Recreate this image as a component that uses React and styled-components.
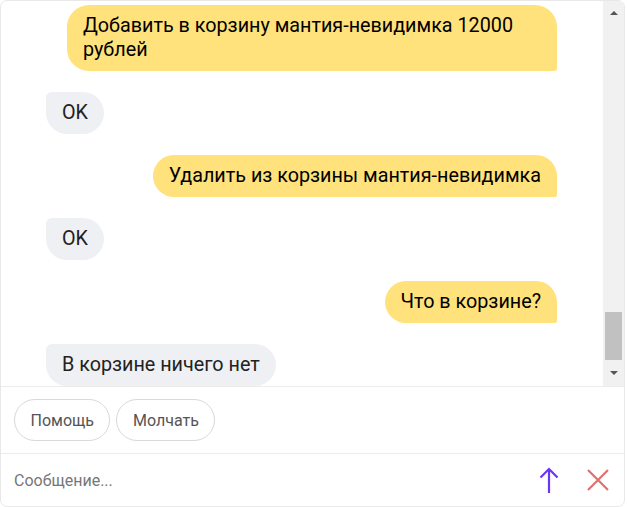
import React from "react";
import styled, { createGlobalStyle } from "styled-components";

const Global = createGlobalStyle`
  html, body { margin: 0; padding: 0; background: #fff; }
  body { font-family: Roboto, "Noto Sans", Arial, sans-serif; }
  * { box-sizing: border-box; }
`;

const Frame = styled.div`
  width: 625px;
  height: 507px;
  border: 1px solid #e8e8e8;
  border-radius: 7px;
  display: flex;
  flex-direction: column;
  overflow: hidden;
  background: #fff;
`;

const ChatArea = styled.div`
  height: 385px;
  flex: none;
  display: flex;
`;

const MessageList = styled.div`
  flex: 1;
  min-width: 0;
  overflow: hidden;
  padding: 0 46px 0 45px;
  display: flex;
  flex-direction: column;
  justify-content: flex-end;
  gap: 21px;
`;

const Scrollbar = styled.div`
  width: 21px;
  flex: none;
  background: #f1f1f1;
  display: flex;
  flex-direction: column;
`;

const ScrollButton = styled.div`
  height: ${(p) => p.$h}px;
  flex: none;
  display: flex;
  justify-content: center;
  align-items: ${(p) => (p.$down ? "flex-start" : "center")};
  padding-top: ${(p) => (p.$down ? 3 : 0)}px;
`;

const Track = styled.div`
  flex: 1;
  display: flex;
  flex-direction: column;
  justify-content: flex-end;
  padding: 0 2px 8px 2px;
`;

const Thumb = styled.div`
  height: 48px;
  background: #c1c1c1;
`;

const Bubble = styled.div`
  flex: none;
  max-width: 490px;
  padding: 9px 16px;
  font-size: 19.75px;
  line-height: 24px;
  color: ${(p) => (p.$user ? "#000" : "#222")};
  background: ${(p) => (p.$user ? "#ffe27b" : "#eff0f4")};
  align-self: ${(p) => (p.$user ? "flex-end" : "flex-start")};
  border-radius: ${(p) => (p.$user ? "22px 22px 3px 22px" : "6px 22px 22px 22px")};
`;

const Suggests = styled.div`
  flex: none;
  border-top: 1px solid #ececec;
  padding: 12px 13px;
  display: flex;
  gap: 6px;
`;

const Chip = styled.button`
  height: 42px;
  padding: 0 15.5px;
  border: 1px solid #d9d9d9;
  border-radius: 21px;
  background: #fff;
  font-family: Roboto, "Noto Sans", Arial, sans-serif;
  font-size: 16px;
  color: #555;
  cursor: pointer;
`;

const InputRow = styled.div`
  flex: 1;
  border-top: 1px solid #ececec;
  display: flex;
  align-items: center;
  padding: 0 10px 0 13px;
  gap: 17px;
`;

const Input = styled.input`
  flex: 1;
  border: none;
  outline: none;
  font-family: Roboto, "Noto Sans", Arial, sans-serif;
  font-size: 16px;
  color: #333;
  padding: 0;
  &::placeholder { color: #777; }
`;

const IconButton = styled.button`
  width: 32px;
  height: 32px;
  border: none;
  background: none;
  padding: 0;
  display: flex;
  align-items: center;
  justify-content: center;
  cursor: pointer;
`;

const messages = [
  { user: true, text: "Добавить в корзину мантия-невидимка 12000 рублей" },
  { user: false, text: "OK" },
  { user: true, text: "Удалить из корзины мантия-невидимка" },
  { user: false, text: "OK" },
  { user: true, text: "Что в корзине?" },
  { user: false, text: "В корзине ничего нет" },
];

const Triangle = ({ down }) => (
  <svg width="8" height="4" viewBox="0 0 8 4">
    <polygon points={down ? "0,0 8,0 4,4" : "4,0 8,4 0,4"} fill="#555" />
  </svg>
);

export default function App() {
  return (
    <>
      <Global />
      <Frame>
        <ChatArea>
          <MessageList>
            {messages.map((m, i) => (
              <Bubble key={i} $user={m.user}>
                {m.text}
              </Bubble>
            ))}
          </MessageList>
          <Scrollbar>
            <ScrollButton $h={23}>
              <Triangle />
            </ScrollButton>
            <Track>
              <Thumb />
            </Track>
            <ScrollButton $h={18} $down>
              <Triangle down />
            </ScrollButton>
          </Scrollbar>
        </ChatArea>
        <Suggests>
          <Chip>Помощь</Chip>
          <Chip>Молчать</Chip>
        </Suggests>
        <InputRow>
          <Input placeholder="Сообщение..." />
          <IconButton aria-label="Отправить">
            <svg width="24" height="28" viewBox="0 0 24 28" fill="none" stroke="#6a35f5" strokeWidth="2.2">
              <path d="M12 3 V27" />
              <path d="M3.5 11.5 L12 3 L20.5 11.5" />
            </svg>
          </IconButton>
          <IconButton aria-label="Закрыть">
            <svg width="24" height="24" viewBox="0 0 24 24" fill="none" stroke="#e07070" strokeWidth="2.2">
              <path d="M2 2 L22 22 M22 2 L2 22" />
            </svg>
          </IconButton>
        </InputRow>
      </Frame>
    </>
  );
}
